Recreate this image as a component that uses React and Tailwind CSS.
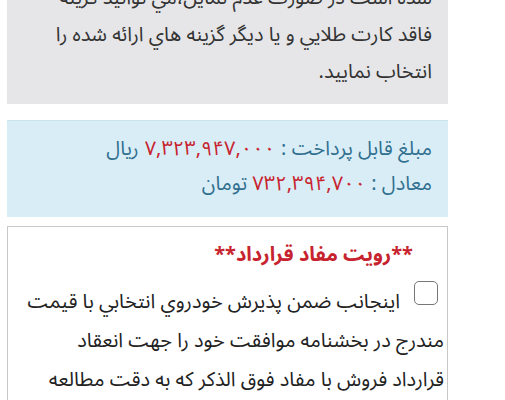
export default function App() {
  const font = { fontFamily: '"Noto Sans Arabic", "DejaVu Sans", sans-serif' };
  return (
    <div dir="rtl" className="w-[505px] h-[400px] overflow-hidden bg-white pl-[7px] pr-[57px]" style={font}>
      <div className="mt-[-32px] bg-[#e6e6e8] pt-[12px] pb-[13px] pr-[16px] text-[20px] leading-[37px] text-[#333]">
        <div className="whitespace-nowrap">شده است در صورت عدم تمایل،مي توانید گزینه</div>
        <div className="whitespace-nowrap">فاقد کارت طلايي و يا ديگر گزينه هاي ارائه شده را</div>
        <div className="whitespace-nowrap">انتخاب نمایید.</div>
      </div>
      <div className="mt-[16px] bg-[#d9edf7] border-t border-[#c9e3ef] pt-[11px] pb-[15px] pr-[16px] text-[20px] leading-[35px] text-[#31708f]">
        <div className="whitespace-nowrap">
          مبلغ قابل پرداخت : <span dir="ltr" className="inline-block w-[132px] text-center text-[#c7232e] tracking-[2px]">۷,۳۲۳,۹۴۷,۰۰۰</span> ریال
        </div>
        <div className="whitespace-nowrap">معادل : <span className="text-[#c7232e]">۷۳۲,۳۹۴,۷۰۰</span> تومان</div>
      </div>
      <div className="mt-[9px] border border-[#c8c8c8] h-[200px] pr-[3px] pt-[12px]">
        <div className="pr-[31px] text-[20px] leading-[32px] font-bold text-[#c7232e] whitespace-nowrap">**رویت مفاد قرارداد**</div>
        <div className="text-[20px] leading-[39px] text-[#222] mt-[12px]">
          <div className="flex items-start whitespace-nowrap">
            <span className="inline-block w-[24px] h-[24px] mt-[-2px] border-[1.5px] border-[#777] rounded-[5px] mr-[6px] ml-[14px] shrink-0"></span>
            <span>اینجانب ضمن پذیرش خودروي انتخابي با قیمت</span>
          </div>
          <div className="whitespace-nowrap">مندرج در بخشنامه موافقت خود را جهت انعقاد</div>
          <div className="whitespace-nowrap">قرارداد فروش با مفاد فوق الذکر که به دقت مطالعه</div>
        </div>
      </div>
    </div>
  );
}
